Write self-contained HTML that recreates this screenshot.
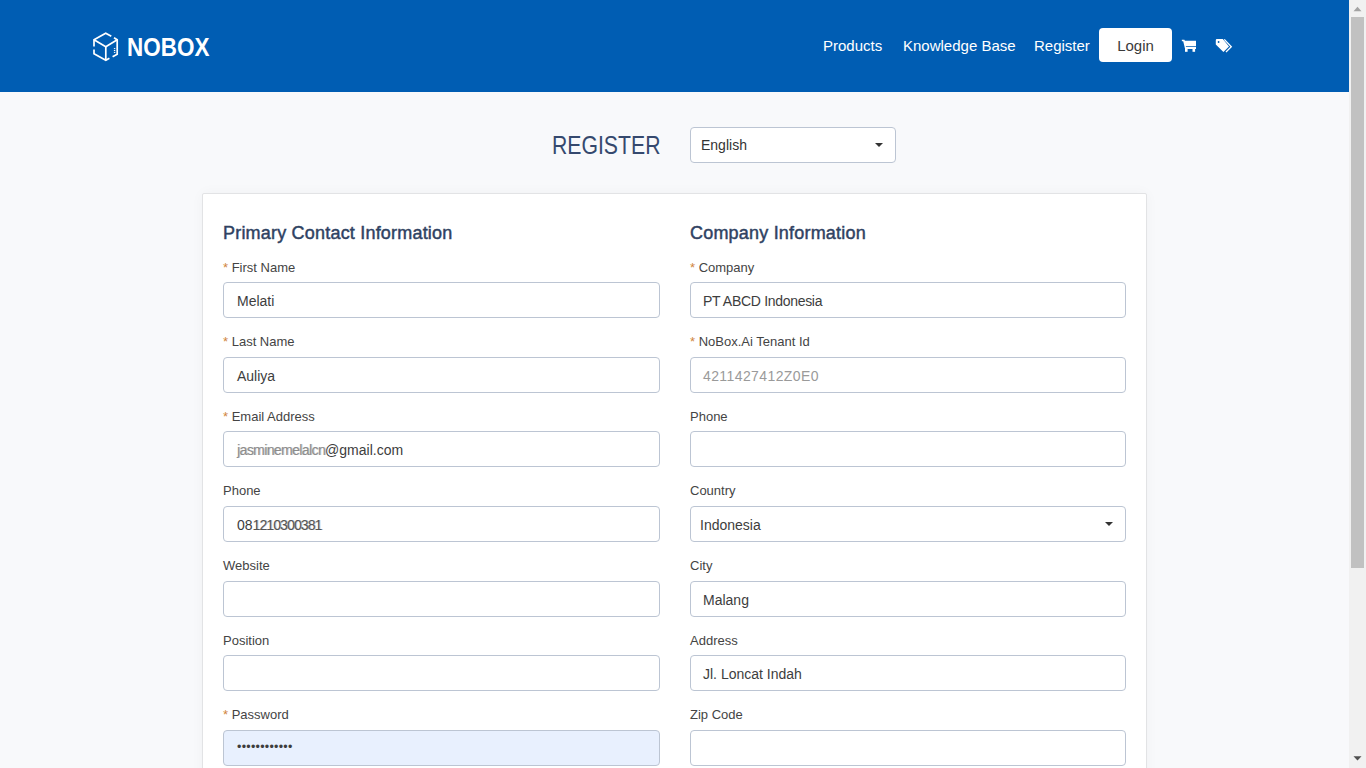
<!DOCTYPE html>
<html><head><meta charset="utf-8">
<style>
*{box-sizing:border-box;margin:0;padding:0}
html,body{width:1366px;height:768px;overflow:hidden}
body{font-family:"Liberation Sans",sans-serif;background:#f8f9fb;position:relative;color:#444}
.hdr{position:absolute;left:0;top:0;width:1349px;height:92px;background:#005db3}
.logo{position:absolute;left:92px;top:31px}
.brand{position:absolute;left:127px;top:32px;font-size:26px;font-weight:bold;color:#fff;transform:scaleX(.864);transform-origin:0 0}
.nav{position:absolute;top:37px;font-size:15px;color:#fff}
.login{position:absolute;left:1099px;top:28px;width:73px;height:34px;background:#fff;border-radius:4px;color:#3a3a3a;font-size:15px;text-align:center;line-height:35px}
.sb{position:absolute;left:1349px;top:0;width:17px;height:768px;background:#f1f1f1}
.thumb{position:absolute;left:1351px;top:17px;width:13px;height:551px;background:#c1c1c1}
.title{position:absolute;left:552px;top:131px;font-size:25.5px;color:#35496e;transform:scaleX(.832);transform-origin:0 0}
.sel{position:absolute;background:#fff;border:1px solid #bcc5d3;border-radius:4px}
.caret{position:absolute;width:0;height:0;border-left:4px solid transparent;border-right:4px solid transparent;border-top:4px solid #333}
.card{position:absolute;left:202px;top:193px;width:945px;height:600px;background:#fff;border:1px solid #e2e3e5;border-radius:2px;box-shadow:0 0 14px rgba(0,0,0,.035)}
.h{position:absolute;top:223px;font-size:18px;font-weight:normal;-webkit-text-stroke:0.45px #2f4262;color:#2f4262;letter-spacing:0.2px;transform-origin:0 0}
.lbl{position:absolute;font-size:13px;color:#444}
.lbl b{color:#d08540;font-weight:normal}
.inp{position:absolute;width:437px;height:36px;background:#fff;border:1px solid #bcc5d3;border-radius:4px;font-size:14px;color:#3d3d3d;padding-left:13px;line-height:36px}
</style></head><body>
<div class="hdr">
  <svg class="logo" width="30" height="32" viewBox="92 31 30 32" style="left:92px;top:31px" fill="none" stroke="#fff" stroke-width="1.7" stroke-linecap="butt" stroke-linejoin="miter">
<path d="M94 46.6V39.8L105.7 33.2L111.3 36.3"/><path d="M114 37.8L117.2 39.8V54.2L112.6 56.8"/>
<path d="M94 39.8L105.8 46.7L117.2 39.8"/><path d="M105.8 46.7V60.2"/>
<path d="M94 49.6V53.8L105.8 60.3L109.4 58.3"/>
<path d="M113.9 48.6h1.4M113.9 50.5h1.4M113.9 52.4h1.4" stroke-width="1"/>
</svg>
  <div class="brand">NOBOX</div>
  <div class="nav" style="left:823px">Products</div>
  <div class="nav" style="left:903px">Knowledge Base</div>
  <div class="nav" style="left:1034px">Register</div>
  <div class="login">Login</div>
<svg style="position:absolute;left:1180px;top:37px" width="56" height="18" viewBox="1180 37 56 18">
<path fill="#fff" d="M1181.8 39.8h2.6l0.5 1h11.1v5.5h-10.2l0.2 0.8h10v1.8h-10.9l-1.9-7.6h-1.3z"/>
<rect x="1185" y="49" width="2.6" height="2.8" fill="#fff"/><rect x="1192.5" y="49" width="2.6" height="2.8" fill="#fff"/>
<path fill="#fff" d="M1216.6 39.1h6.2l6.2 7.3-5.6 5.6-7.6-7.4v-4.2a1.3 1.3 0 0 1 0.8-1.3z"/>
<circle cx="1218.6" cy="42" r="0.9" fill="#005db3"/>
<path fill="none" stroke="#fff" stroke-width="1.3" d="M1224.3 39.4l7 7.3-5.3 5.3"/>
</svg>
</div>
<div class="sb"></div><div class="thumb"></div>
<svg style="position:absolute;left:1349px;top:0" width="17" height="768" viewBox="0 0 17 768"><path d="M4.5 11.2L8.5 6.8L12.5 11.2z" fill="#a3a3a3"/><path d="M4.5 756.2L8.5 760.6L12.5 756.2z" fill="#505050"/></svg>
<div class="title">REGISTER</div>
<div class="sel" style="left:690px;top:127px;width:206px;height:36px;font-size:14px;color:#333;padding-left:10px;line-height:34px">English<div class="caret" style="left:184px;top:15px"></div></div>
<div class="card"></div>
<div class="h" style="left:223px">Primary Contact Information</div>
<div class="h" style="left:690px">Company Information</div>

<div class="lbl" style="left:223px;top:260px"><b>*</b> First Name</div>
<div class="inp" style="left:223px;top:282px">Melati</div>
<div class="lbl" style="left:223px;top:334px"><b>*</b> Last Name</div>
<div class="inp" style="left:223px;top:357px">Auliya</div>
<div class="lbl" style="left:223px;top:409px"><b>*</b> Email Address</div>
<div class="inp" style="left:223px;top:431px"><span style="color:#8c8c8c;letter-spacing:-0.6px;text-shadow:1px 0 0 rgba(90,90,90,.3)">jasminemelalcn</span>@gmail.com</div>
<div class="lbl" style="left:223px;top:483px">Phone</div>
<div class="inp" style="left:223px;top:506px">08<span style="color:#555;letter-spacing:-0.9px;text-shadow:1px 0 0 rgba(140,140,140,.5)">1210300381</span></div>
<div class="lbl" style="left:223px;top:558px">Website</div>
<div class="inp" style="left:223px;top:581px"></div>
<div class="lbl" style="left:223px;top:633px">Position</div>
<div class="inp" style="left:223px;top:655px"></div>
<div class="lbl" style="left:223px;top:707px"><b>*</b> Password</div>
<div class="inp" style="left:223px;top:730px;background:#e8f0fe;font-size:12.5px;letter-spacing:0.25px;line-height:32px">••••••••••••</div>

<div class="lbl" style="left:690px;top:260px"><b>*</b> Company</div>
<div class="inp" style="left:690px;top:282px;width:436px;padding-left:12px"><span style="letter-spacing:-0.3px">PT ABCD Indonesia</span></div>
<div class="lbl" style="left:690px;top:334px"><b>*</b> NoBox.Ai Tenant Id</div>
<div class="inp" style="left:690px;top:357px;width:436px;padding-left:12px"><span style="color:#9a9a9a;letter-spacing:0.4px">4211427412Z0E0</span></div>
<div class="lbl" style="left:690px;top:409px">Phone</div>
<div class="inp" style="left:690px;top:431px;width:436px;padding-left:12px"></div>
<div class="lbl" style="left:690px;top:483px">Country</div>
<div class="inp" style="left:690px;top:506px;width:436px;padding-left:9px">Indonesia<div class="caret" style="left:414px;top:15px"></div></div>
<div class="lbl" style="left:690px;top:558px">City</div>
<div class="inp" style="left:690px;top:581px;width:436px;padding-left:12px">Malang</div>
<div class="lbl" style="left:690px;top:633px">Address</div>
<div class="inp" style="left:690px;top:655px;width:436px;padding-left:12px">Jl. Loncat Indah</div>
<div class="lbl" style="left:690px;top:707px">Zip Code</div>
<div class="inp" style="left:690px;top:730px;width:436px;padding-left:12px"></div>
</body></html>
